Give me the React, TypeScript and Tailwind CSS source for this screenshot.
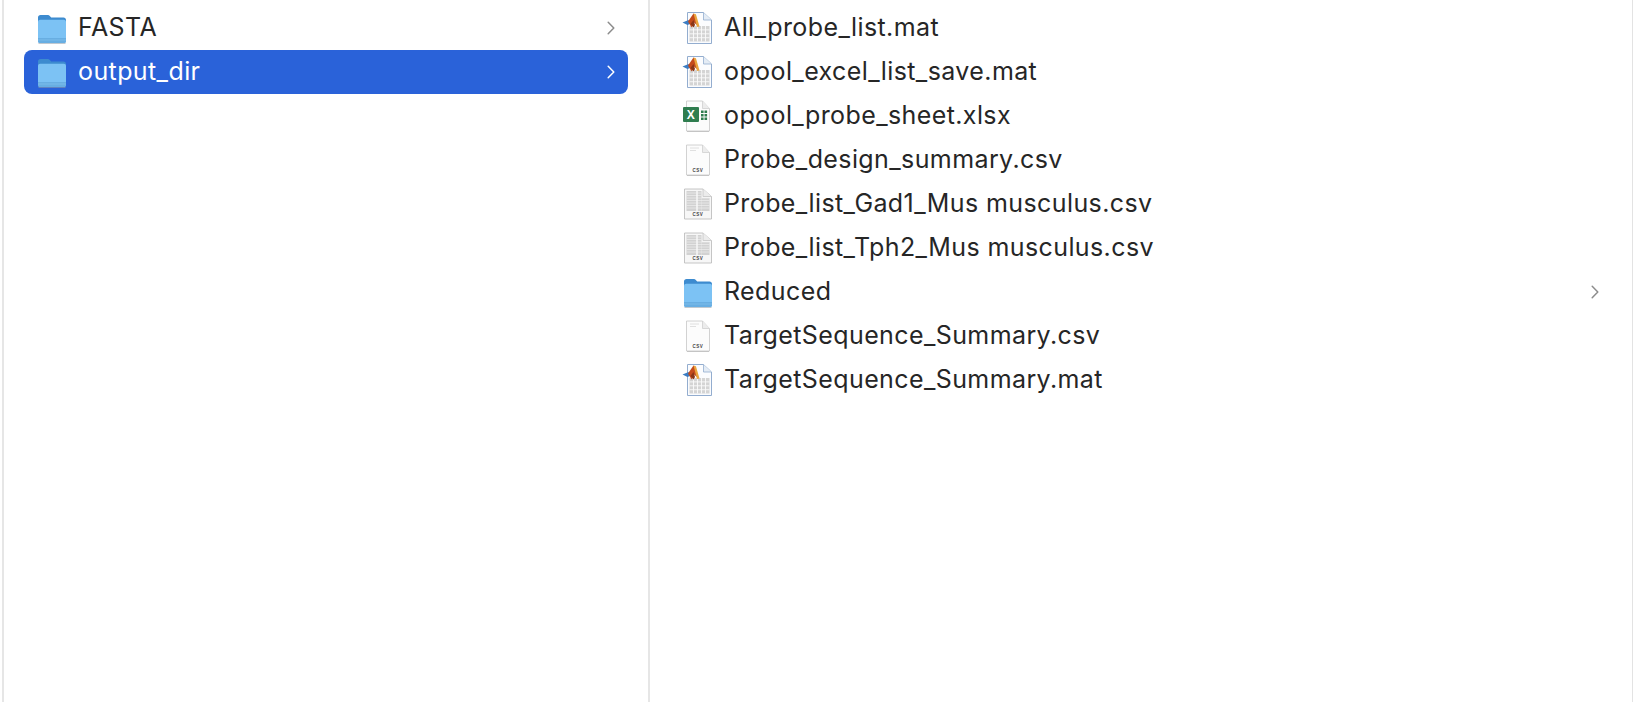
import React from 'react';

type Kind = 'folder' | 'mat' | 'xlsx' | 'csv' | 'csvGrid';

const Folder = () => (
  <svg width="32" height="32" viewBox="0 0 32 32" fill="none">
    <path d="M2 5.500C2 4 3 3 4.500 3h7c1 0 1.600.3 2.300 1l1.400 1.400h12.300C29 5.400 30 6.400 30 8v21c0 1-1 2-2.200 2H4.200C3 31 2 30 2 29V5.500z" fill="#3d8bcf" />
    <path d="M2 10c0-1.400.9-2.300 2.200-2.300h23.600C29.100 7.700 30 8.600 30 10v19c0 1.200-1 2-2.200 2H4.200C3 31 2 30.200 2 29V10z" fill="#7cc2f4" />
    <path d="M2 26h28v3c0 1.200-1 2-2.200 2H4.200C3 31 2 30.200 2 29v-3z" fill="#68aee2" />
    <path d="M2 28h28" stroke="#8cc8f0" strokeWidth="0.500" />
    <path d="M2.500 31.500h27" stroke="#8f9eab" strokeWidth="0.800" opacity="0.700" />
  </svg>
);

const DocShell = () => (
  <>
    <path d="M4.500 1h16l7 7.500v22.500h-23V1z" fill="#fcfcfc" stroke="#c6c6c6" strokeWidth="0.800" />
    <path d="M20.500 1v7.500h7" fill="#ececec" stroke="#cfcfcf" strokeWidth="0.800" />
    <path d="M5 31.600h22" stroke="#b5b5b5" strokeWidth="0.800" />
  </>
);

const MatFile = () => (
  <svg width="32" height="32" viewBox="0 0 32 32" fill="none">
    <path d="M5.500 .5h16l8 7.500v23.500h-24V.5z" fill="#fbfcfe" stroke="#93adcf" strokeWidth="1" />
    <path d="M21.500 .5v7.500h8" fill="#e4ecf5" stroke="#93adcf" strokeWidth="0.800" />
    <rect x="7.500" y="14" width="20" height="15.500" fill="#d4d4d4" />
    <path d="M11.500 14v15.500M15.500 14v15.500M19.500 14v15.500M23.500 14v15.500M7.500 17.900h20M7.500 21.800h20M7.500 25.700h20" stroke="#fbfbfb" strokeWidth="0.900" />
    <path d="M0.500 10.500l6-2.500 2.500 3.500-3.500 1.500z" fill="#3b7cc2" />
    <path d="M6 9.500l5.500-8 2 1 2 11-3.500-3-2.500 5z" fill="#c44b1c" />
    <path d="M11.500 1.500l2.500 1 3.500 12-2.500 .5z" fill="#eaa63e" />
    <path d="M8.500 12l3-4 1.500 5-1.500 2.500z" fill="#8a3617" />
  </svg>
);

const XlsxFile = () => (
  <svg width="32" height="32" viewBox="0 0 32 32" fill="none">
    <DocShell />
    <rect x="1" y="7" width="16" height="15" rx="1" fill="#2f7d4f" />
    <text x="9" y="18.500" textAnchor="middle" fontSize="12" fontWeight="700" fontFamily="Liberation Sans, sans-serif" fill="#ffffff">X</text>
    <path d="M19 10.500h2.600v2.600H19zM22.500 10.500h2.600v2.600h-2.600zM19 14h2.600v2.600H19zM22.500 14h2.600v2.600h-2.600zM19 17.500h2.600v2.600H19zM22.500 17.500h2.600v2.600h-2.600z" fill="#2f7d4f" />
  </svg>
);

const CsvLabel = () => (
  <text x="16" y="28" textAnchor="middle" fontSize="4.500" fontWeight="700" letterSpacing="0.500" fontFamily="Liberation Sans, sans-serif" fill="#444444">CSV</text>
);

const CsvFile = () => (
  <svg width="32" height="32" viewBox="0 0 32 32" fill="none">
    <DocShell />
    <path d="M8 4h9M8 6.500h6" stroke="#dcdcdc" strokeWidth="0.900" />
    <CsvLabel />
  </svg>
);

const CsvDense = () => (
  <svg width="32" height="32" viewBox="0 0 32 32" fill="none">
    <path d="M2.500 1h18.500l8.500 7.500v22.500h-27V1z" fill="#f7f7f7" stroke="#b8b8b8" strokeWidth="0.800" />
    <path d="M21 1v7.500h8.500" fill="#ececec" stroke="#c6c6c6" strokeWidth="0.800" />
    <rect x="4.500" y="3" width="15" height="20" fill="#d2d2d2" />
    <rect x="19.500" y="10" width="8" height="13" fill="#d2d2d2" />
    <path d="M4.500 5h15M4.500 7.500h15M4.500 10h23M4.500 12.500h23M4.500 15h23M4.500 17.500h23M4.500 20h23" stroke="#efefef" strokeWidth="0.700" />
    <path d="M15 3v20" stroke="#f7f7f7" strokeWidth="1.500" />
    <CsvLabel />
  </svg>
);

const icons: Record<Kind, React.FC> = {
  folder: Folder,
  mat: MatFile,
  xlsx: XlsxFile,
  csv: CsvFile,
  csvGrid: CsvDense,
};

const Chevron = ({ className }: { className: string }) => (
  <svg className={className} width="8" height="14" viewBox="0 0 8 14" fill="none">
    <path d="M1.200 1.200L6.800 7l-5.600 5.800" stroke="currentColor" strokeWidth="1.500" strokeLinecap="round" strokeLinejoin="round" />
  </svg>
);

const Row = ({ name, kind, selected }: { name: string; kind: Kind; selected?: boolean }) => {
  const Icon = icons[kind];
  return (
    <div className={`flex h-11 items-center gap-[10px] rounded-lg pl-3 pr-[13px] ${selected ? 'bg-[#2a62d9] text-white' : 'text-[#262626]'}`}>
      <Icon />
      <span className="flex-1 truncate">{name}</span>
      {kind === 'folder' && <Chevron className={selected ? 'text-white' : 'text-[#8c8c8c]'} />}
    </div>
  );
};

const leftRows: { name: string; kind: Kind; selected?: boolean }[] = [
  { name: 'FASTA', kind: 'folder' },
  { name: 'output_dir', kind: 'folder', selected: true },
];

const rightRows: { name: string; kind: Kind }[] = [
  { name: 'All_probe_list.mat', kind: 'mat' },
  { name: 'opool_excel_list_save.mat', kind: 'mat' },
  { name: 'opool_probe_sheet.xlsx', kind: 'xlsx' },
  { name: 'Probe_design_summary.csv', kind: 'csv' },
  { name: 'Probe_list_Gad1_Mus musculus.csv', kind: 'csvGrid' },
  { name: 'Probe_list_Tph2_Mus musculus.csv', kind: 'csvGrid' },
  { name: 'Reduced', kind: 'folder' },
  { name: 'TargetSequence_Summary.csv', kind: 'csv' },
  { name: 'TargetSequence_Summary.mat', kind: 'mat' },
];

export default function App() {
  return (
    <div className="flex h-[702px] overflow-hidden bg-white pl-[2px] pr-[1px] font-['Inter',sans-serif] text-[25px] tracking-[0.4px]">
      <div className="w-[648px] border-x-2 border-[#e6e6e6] px-5 pt-[6px]">
        {leftRows.map((r) => (
          <Row key={r.name} {...r} />
        ))}
      </div>
      <div className="flex-1 border-r border-[#e3e3e3] pl-[20px] pr-5 pt-[6px]">
        {rightRows.map((r) => (
          <Row key={r.name} {...r} />
        ))}
      </div>
    </div>
  );
}
